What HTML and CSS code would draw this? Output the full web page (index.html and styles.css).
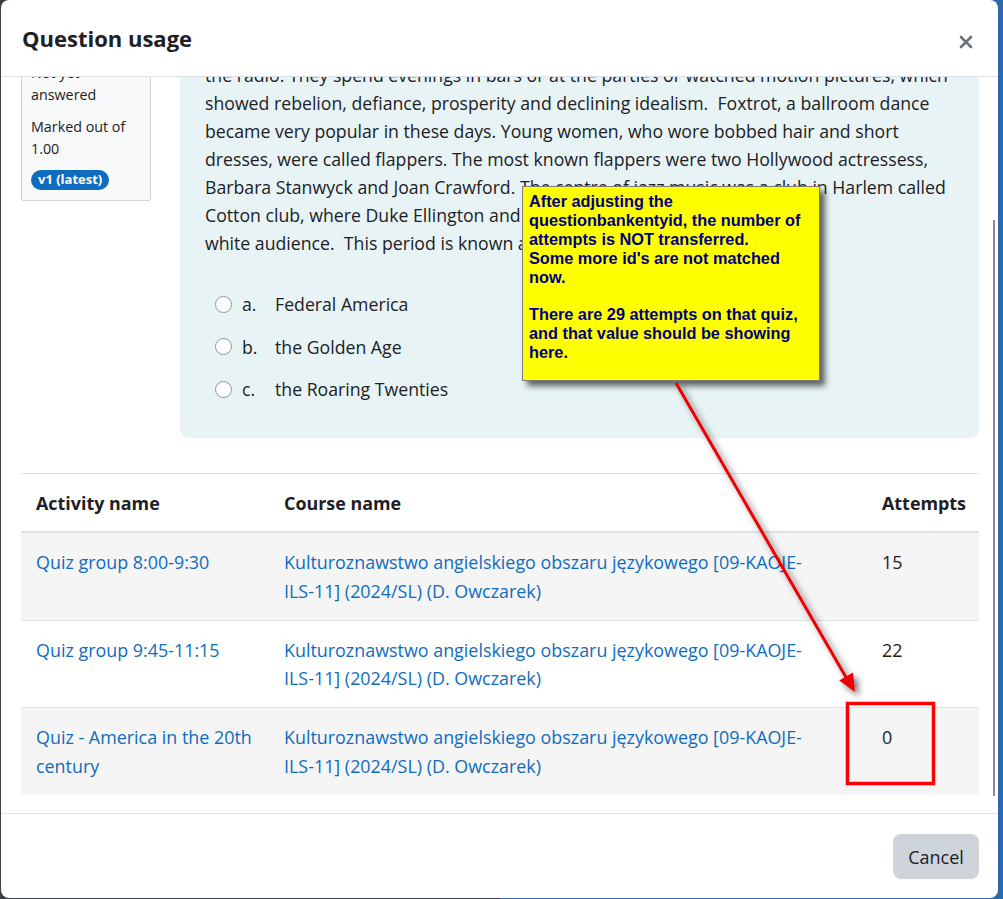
FILE: index.html
```html
<!DOCTYPE html>
<html lang="en">
<head>
<meta charset="utf-8">
<title>Question usage</title>
<link rel="stylesheet" href="styles.css">
</head>
<body>
<div class="modal">
  <div class="modal-header">
    <h5 class="modal-title">Question usage</h5>
    <button class="close" aria-label="Close">
      <svg width="14" height="14" viewBox="0 0 14 14"><path d="M2 2 L12 12 M12 2 L2 12" stroke="#6a737b" stroke-width="2.6" stroke-linecap="round"/></svg>
    </button>
  </div>
  <div class="modal-body">
    <div class="body-inner">
      <div class="que">
        <div class="info">
          <h3 class="qno">Question <b>1</b></h3>
          <div class="state">Not yet answered</div>
          <div class="grade">Marked out of 1.00</div>
          <span class="badge">v1 (latest)</span>
        </div>
        <div class="content">
          <p class="qtext">In the 1920s Americans enjoyed the period of prosperity and optimism. They bought cars,<br>
          houses and new electric appliances, they danced to the jazz music and listened to<br>
          the radio. They spend evenings in bars or at the parties or watched motion pictures, which<br>
          showed rebelion, defiance, prosperity and declining idealism.&nbsp; Foxtrot, a ballroom dance<br>
          became very popular in these days. Young women, who wore bobbed hair and short<br>
          dresses, were called flappers. The most known flappers were two Hollywood actressess,<br>
          Barbara Stanwyck and Joan Crawford. The centre of jazz music was a club in Harlem called<br>
          Cotton club, where Duke Ellington and his orchestra performed for the<br>
          white audience.&nbsp; This period is known as:</p>
          <div class="answers">
            <label class="opt"><span class="radio"></span><span class="letter">a.</span><span>Federal America</span></label>
            <label class="opt"><span class="radio"></span><span class="letter">b.</span><span>the Golden Age</span></label>
            <label class="opt"><span class="radio"></span><span class="letter">c.</span><span>the Roaring Twenties</span></label>
          </div>
        </div>
      </div>
      <table class="usage">
        <thead>
          <tr><th class="c1">Activity name</th><th class="c2">Course name</th><th class="c3">Attempts</th></tr>
        </thead>
        <tbody>
          <tr class="odd"><td><a href="#">Quiz group 8:00-9:30</a></td><td class="course"><a href="#">Kulturoznawstwo angielskiego obszaru językowego [09-KAOJE-ILS-11] (2024/SL) (D. Owczarek)</a></td><td>15</td></tr>
          <tr><td><a href="#">Quiz group 9:45-11:15</a></td><td class="course"><a href="#">Kulturoznawstwo angielskiego obszaru językowego [09-KAOJE-ILS-11] (2024/SL) (D. Owczarek)</a></td><td>22</td></tr>
          <tr class="odd"><td><a href="#">Quiz - America in the 20th century</a></td><td class="course"><a href="#">Kulturoznawstwo angielskiego obszaru językowego [09-KAOJE-ILS-11] (2024/SL) (D. Owczarek)</a></td><td>0</td></tr>
        </tbody>
      </table>
    </div>
    <div class="thumb"></div>
  </div>
  <div class="modal-footer">
    <button class="btn">Cancel</button>
  </div>
</div>

<div class="note">After adjusting the<br>questionbankentyid, the number of<br>attempts is NOT transferred.<br>Some more id's are not matched<br>now.<br><br>There are 29 attempts on that quiz,<br>and that value should be showing<br>here.</div>

<svg class="marks" width="1003" height="899" viewBox="0 0 1003 899">
  <defs>
    <filter id="sh" x="-20%" y="-20%" width="140%" height="140%">
      <feDropShadow dx="4" dy="4" stdDeviation="3" flood-color="#000" flood-opacity="0.55"/>
    </filter>
  </defs>
  <g filter="url(#sh)">
    <line x1="676" y1="383" x2="847" y2="679" stroke="#ee0000" stroke-width="3"/>
    <polygon points="855,692 853,672.4 839.2,680.4" fill="#ee0000"/>
  </g>
  <rect x="847.5" y="703.5" width="86" height="80" fill="none" stroke="#ff0000" stroke-width="3.5"/>
</svg>
</body>
</html>
```
FILE: styles.css
```css
* { box-sizing: border-box; }
html, body { margin: 0; height: 100%; }
body {
  background: linear-gradient(to right, #3c3f44 0, #3c3f44 500px, #2c68ac 500px);
  font-family: "Open Sans", "Noto Sans", sans-serif;
  color: #1d2125;
  overflow: hidden;
  position: relative;
  width: 1003px;
  height: 899px;
}
.modal {
  margin-left: 1px;
  width: 997px;
  height: 898px;
  background: #fff;
  border-radius: 8px;
  display: flex;
  flex-direction: column;
  overflow: hidden;
}
.modal-header {
  height: 77px;
  flex: none;
  border-bottom: 1px solid #dee2e6;
  display: flex;
  align-items: center;
  justify-content: space-between;
  padding: 0 25px 0 21px;
}
.modal-title {
  margin: 0;
  font-size: 22px;
  font-weight: 700;
  padding-top: 0;
}
.close {
  border: 0;
  background: none;
  padding: 0;
  width: 14px;
  height: 14px;
  margin-top: 7px;
}
.close svg { display: block; }
.modal-body {
  flex: 1;
  overflow: hidden;
  position: relative;
}
.body-inner {
  margin-top: -92px;
  padding: 0 19px 0 20px;
}
.que {
  display: flex;
  align-items: flex-start;
  gap: 29px;
}
.info {
  width: 130px;
  flex: none;
  background: #f8f9fa;
  border: 1px solid #cfd4da;
  border-radius: 2px;
  padding: 8px 9px 10px;
  font-size: 14.3px;
  line-height: 22px;
}
.qno {
  margin: 0 0 46px;
  font-size: 15px;
  line-height: 22px;
  font-weight: 400;
}
.state { margin-bottom: 10px; }
.grade { margin-bottom: 8px; }
.badge {
  display: inline-block;
  background: #0f6cbf;
  color: #fff;
  font-weight: 700;
  font-size: 13px;
  line-height: 19px;
  padding: 0 7px 1px;
  border-radius: 10px;
}
.content {
  flex: 1;
  background: #e7f3f5;
  border-radius: 0 0 9px 9px;
  padding: 20px 20px 27px 25px;
  font-size: 17.7px;
  line-height: 28px;
}
.qtext { margin: 0 0 26px; white-space: nowrap; }
.answers { display: flex; flex-direction: column; }
.opt {
  display: flex;
  align-items: center;
  height: 42.5px;
}
.radio {
  width: 17px;
  height: 17px;
  border: 1.6px solid #8f949b;
  border-radius: 50%;
  background: #fff;
  margin: 0 10px 0 10px;
  flex: none;
}
.letter { width: 33px; }
.usage {
  width: 958px;
  margin-top: 35px;
  border-collapse: collapse;
  font-size: 17.9px;
  line-height: 28.5px;
}
.usage th, .usage td {
  text-align: left;
  vertical-align: top;
  padding: 15px 13px 14.5px 15px;
  border-top: 1px solid #dee2e6;
}
.usage td.course { padding-right: 50px; }
.usage th { font-weight: 700; padding-bottom: 14px; }
.usage thead th { border-bottom: 2px solid #dee2e6; }
.c1 { width: 248px; }
.c2 { width: 598px; }
.c3 { width: 112px; }
.usage tr.odd td { background: #f5f5f5; }
.usage a { color: #0f6cbf; text-decoration: none; }
.thumb {
  position: absolute;
  right: 3px;
  top: 143px;
  width: 2px;
  height: 576px;
  background: #8c8c8c;
}
.modal-footer {
  flex: none;
  height: 85px;
  border-top: 1px solid #dee2e6;
  display: flex;
  justify-content: flex-end;
  align-items: flex-start;
  padding: 20px 19px 0 0;
}
.btn {
  width: 86px;
  height: 45px;
  border: 0;
  border-radius: 8px;
  background: #ced4da;
  color: #1d2125;
  font-family: "Open Sans", "Noto Sans", sans-serif;
  font-size: 18px;
}
.note {
  position: absolute;
  left: 522px;
  top: 186px;
  width: 298px;
  height: 195px;
  background: #ffff00;
  border: 1px solid #7d7d7d;
  box-shadow: 5px 5px 6px rgba(0, 0, 0, 0.6);
  padding: 5px 6px;
  font-family: "Liberation Sans", Arial, sans-serif;
  font-weight: 700;
  font-size: 16.3px;
  line-height: 18.9px;
  color: #00007f;
}
.marks {
  position: absolute;
  left: 0;
  top: 0;
  pointer-events: none;
}
```
